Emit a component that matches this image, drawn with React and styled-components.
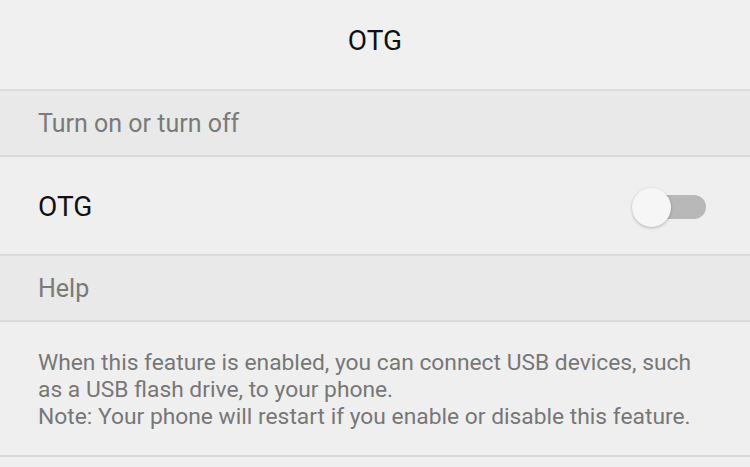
import styled, { createGlobalStyle } from "styled-components";

const Global = createGlobalStyle`
  html, body {
    margin: 0;
    padding: 0;
    background: #efefef;
  }
  body {
    font-family: Roboto, "Noto Sans", sans-serif;
  }
`;

const Page = styled.div`
  display: flex;
  flex-direction: column;
  width: 750px;
  height: 467px;
  overflow: hidden;
  background: #efefef;
`;

const TitleBar = styled.div`
  height: 81px;
  padding-bottom: 8px;
  display: flex;
  align-items: center;
  justify-content: center;
  background: #f0f0f0;
  border-bottom: 2px solid #dcdcdc;
  font-size: 28px;
  color: #111;
`;

const SectionHeader = styled.div`
  height: 64px;
  display: flex;
  align-items: center;
  padding-left: 38px;
  background: #e9e9e9;
  border-bottom: 2px solid #dadada;
  font-size: 25px;
  color: #7a7a7a;
`;

const Row = styled.div`
  height: 95px;
  display: flex;
  align-items: center;
  justify-content: space-between;
  padding: 2px 44px 0 38px;
  background: #efefef;
  border-bottom: 2px solid #dadada;
`;

const RowLabel = styled.span`
  font-size: 28px;
  color: #111;
`;

const Switch = styled.div`
  position: relative;
  width: 74px;
  height: 40px;
  display: flex;
  align-items: center;
`;

const Track = styled.div`
  margin-left: 32px;
  width: 42px;
  height: 24px;
  border-radius: 0 12px 12px 0;
  background: #b8b8b8;
`;

const Thumb = styled.div`
  position: absolute;
  left: 0;
  top: 1px;
  width: 39px;
  height: 39px;
  border-radius: 50%;
  background: #f6f6f6;
  box-shadow: 0 1px 3px rgba(0, 0, 0, 0.25);
`;

const HelpText = styled.div`
  padding: 27px 38px 0 38px;
  height: 106px;
  font-size: 22.8px;
  line-height: 27px;
  color: #777;
  border-bottom: 2px solid #dadada;
  white-space: nowrap;
`;

export default function App() {
  return (
    <>
      <Global />
      <Page>
        <TitleBar>OTG</TitleBar>
        <SectionHeader>Turn on or turn off</SectionHeader>
        <Row>
          <RowLabel>OTG</RowLabel>
          <Switch>
            <Track />
            <Thumb />
          </Switch>
        </Row>
        <SectionHeader>Help</SectionHeader>
        <HelpText>
          When this feature is enabled, you can connect USB devices, such
          <br />
          as a USB flash drive, to your phone.
          <br />
          Note: Your phone will restart if you enable or disable this feature.
        </HelpText>
      </Page>
    </>
  );
}
